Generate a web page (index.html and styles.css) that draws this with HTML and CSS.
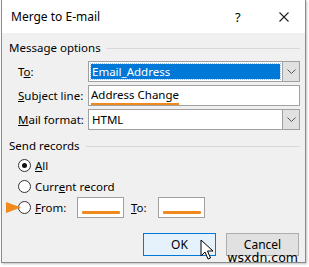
FILE: index.html
```html
<!DOCTYPE html>
<html>
<head>
<meta charset="utf-8">
<link rel="stylesheet" href="styles.css">
</head>
<body>
<div class="dialog">
  <div class="titlebar">
    <span class="title">Merge to E-mail</span>
    <span class="help">?</span>
    <svg class="close" width="10" height="10" viewBox="0 0 10 10"><path d="M0.5 0.5 L9.5 9.5 M9.5 0.5 L0.5 9.5" stroke="#222" stroke-width="1.1" fill="none"/></svg>
  </div>
  <div class="body">
    <div class="group-head first"><span>Message options</span><span class="rule"></span></div>
    <div class="form">
      <label class="lbl">T<u>o</u>:</label>
      <div class="combo">
        <div class="field"><span class="sel">Email_Address</span></div>
        <div class="drop"><svg width="9" height="5" viewBox="0 0 9 5"><path d="M0.5 0.5 L4.5 4.5 L8.5 0.5" stroke="#555" fill="none"/></svg></div>
      </div>
      <label class="lbl"><u>S</u>ubject line:</label>
      <div class="text"><span class="subj">Address Change</span></div>
      <label class="lbl"><u>M</u>ail format:</label>
      <div class="combo plain">
        <div class="field">HTML</div>
        <div class="drop"><svg width="9" height="5" viewBox="0 0 9 5"><path d="M0.5 0.5 L4.5 4.5 L8.5 0.5" stroke="#555" fill="none"/></svg></div>
      </div>
    </div>
    <div class="group-head second"><span>Send records</span><span class="rule"></span></div>
    <div class="radios">
      <div class="radio"><span class="dot on"></span><span><u>A</u>ll</span></div>
      <div class="radio"><span class="dot"></span><span>Curr<u>e</u>nt record</span></div>
      <div class="radio from">
        <svg class="arrow" width="15" height="11" viewBox="0 0 15 11"><path d="M0 0 L15 5.5 L0 11 Z" fill="#f08a1c"/></svg>
        <span class="dot"></span><span class="fromlbl"><u>F</u>rom:</span>
        <div class="small"><span class="mark"></span></div>
        <span class="tolbl"><u>T</u>o:</span>
        <div class="small"><span class="mark"></span></div>
      </div>
    </div>
    <div class="buttons">
      <div class="btn ok">OK
        <svg class="cursor" width="14" height="22" viewBox="0 0 14 22"><path d="M1 1 L1 17 L5 13 L8 20 L10.5 19 L7.5 12 L13 12 Z" fill="#fff" stroke="#000" stroke-width="1"/></svg>
      </div>
      <div class="btn">Cancel</div>
    </div>
    <div class="wm">wsxdn.com</div>
  </div>
</div>
</body>
</html>
```
FILE: styles.css
```css
html, body { margin: 0; padding: 0; background: #fff; }
body { font-family: "Noto Sans", "Open Sans", sans-serif; font-size: 11.5px; color: #000; width: 309px; height: 267px; overflow: hidden; }
.dialog { margin-left: 1px; width: 303px; height: 262px; border: 1px solid #8a8a8a; border-top: none; background: #f0f0f0; box-shadow: 1px 1px 2px rgba(0,0,0,0.25); display: flex; flex-direction: column; }
.titlebar { height: 33px; flex: none; background: #fff; display: flex; align-items: center; padding-left: 9px; font-size: 12px; }
.title { flex: 1; }
.help { width: 7px; margin-right: 37px; font-size: 13px; }
.close { margin-right: 16px; }
.body { position: relative; flex: 1; padding: 0 5px 0 7px; }
.group-head { display: flex; align-items: center; height: 17px; }
.group-head.first { margin-top: 6px; }
.group-head .rule { flex: 1; border-top: 1px solid #d8d8d8; margin-left: 6px; margin-top: 1px; }
.group-head.second { margin-top: 7px; }
.form { display: grid; grid-template-columns: 70px 212px; grid-auto-rows: 21px; row-gap: 3px; padding-left: 9px; margin-top: 5px; align-items: stretch; }
.lbl { line-height: 21px; }
.combo { display: flex; border: 1px solid #a0a0a0; background: #fff; box-sizing: border-box; }
.combo .field { flex: 1; padding: 1px 2px; display: flex; align-items: center; }
.combo.plain .field { padding-left: 3px; }
.sel { background: #0078d7; color: #fff; flex: 1; height: 15px; line-height: 15px; padding-left: 1px; outline: 1px dotted #9bc5ee; }
.drop { width: 16px; background: #e1e1e1; border-left: 1px solid #a0a0a0; display: flex; align-items: center; justify-content: center; }
.text { border: 1px solid #a0a0a0; background: #fff; box-sizing: border-box; padding-left: 2px; display: flex; align-items: center; }
.subj { border-bottom: 2px solid #f08a1c; line-height: 14px; padding-bottom: 1px; margin-top: 1px; }
.radios { display: flex; flex-direction: column; gap: 6px; padding-left: 9px; margin-top: 4px; }
.radio { display: flex; align-items: center; gap: 4px; height: 15px; }
.dot { width: 11px; height: 11px; border: 1px solid #333; border-radius: 50%; background: #fff; display: inline-flex; align-items: center; justify-content: center; flex: none; }
.dot.on::after { content: ""; width: 5px; height: 5px; border-radius: 50%; background: #111; }
.radio.from { position: relative; height: 21px; margin-top: -3px; }
.arrow { position: absolute; left: -12px; top: 5px; }
.fromlbl { width: 38px; }
.small { width: 47px; height: 21px; border: 1px solid #a0a0a0; background: #fff; box-sizing: border-box; display: flex; align-items: flex-end; justify-content: center; padding-bottom: 3px; }
.mark { width: 38px; height: 3px; background: #f08a1c; border-radius: 1px; }
.tolbl { margin-left: 3px; width: 23px; }
.buttons { display: flex; justify-content: flex-end; gap: 10px; margin-top: 15px; padding-right: 1px; }
.btn { position: relative; width: 73px; height: 23px; box-sizing: border-box; border: 1px solid #adadad; background: #e1e1e1; display: flex; align-items: center; justify-content: center; font-size: 12px; }
.btn.ok { background: #e5f1fb; border-color: #0078d7; }
.cursor { position: absolute; left: 56px; top: 5px; }
.wm { position: absolute; right: 7px; bottom: -3px; font-family: "DejaVu Sans", sans-serif; font-size: 12.5px; color: #000; line-height: 14px; }
```
